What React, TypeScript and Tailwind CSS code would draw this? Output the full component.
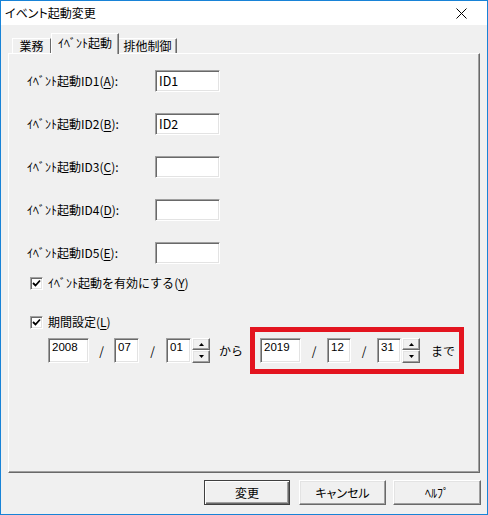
import React from "react";

const sunken =
  "bg-white border border-t-[#a0a0a0] border-l-[#a0a0a0] border-r-white border-b-white shadow-[inset_1px_1px_0_#696969,inset_-1px_-1px_0_#e3e3e3]";
const raised =
  "bg-[#f0f0f0] border border-t-white border-l-white border-r-[#696969] border-b-[#696969] shadow-[inset_-1px_-1px_0_#a0a0a0,inset_1px_1px_0_#e3e3e3]";

function U({ c }: { c: string }) {
  return <span className="underline underline-offset-2">{c}</span>;
}

function Row({ n, k, value }: { n: number; k: string; value?: string }) {
  return (
    <div className="flex items-center h-[22px]">
      <div className="w-[128px] whitespace-nowrap text-[12px] leading-none">
        ｲﾍﾞﾝﾄ起動ID{n}(<U c={k} />):
      </div>
      <div className={`${sunken} w-[65px] h-[22px] px-[3px] pt-[2px] text-[12.5px] leading-[15px]`}>
        {value}
      </div>
    </div>
  );
}

function Check({ label, k }: { label: string; k: string }) {
  return (
    <div className="flex items-center h-[14px]">
      <div className={`${sunken} w-[13px] h-[13px] flex items-center justify-center`}>
        <svg width="9" height="9" viewBox="0 0 9 9">
          <polyline points="1,4 3.5,6.5 8,1.5" fill="none" stroke="#000" strokeWidth="1.8" />
        </svg>
      </div>
      <div className="ml-[5px] text-[12px] leading-none whitespace-nowrap">
        {label}(<U c={k} />)
      </div>
    </div>
  );
}

function Num({ v, w }: { v: string; w: string }) {
  return (
    <div className={`${sunken} ${w} h-[25px] px-[3px] pt-[1px] text-[11.5px] leading-[15px] font-['Liberation_Sans_Narrow','Liberation_Sans',sans-serif]`}>
      {v}
    </div>
  );
}

function Spin() {
  return (
    <div className="flex flex-col w-[18px] h-[25px] ml-[1px]">
      <div className={`${raised} h-[12px] flex items-center justify-center`}>
        <svg width="5" height="3" viewBox="0 0 5 3">
          <polygon points="2.5,0 5,3 0,3" fill="#000" />
        </svg>
      </div>
      <div className={`${raised} h-[13px] flex items-center justify-center`}>
        <svg width="5" height="3" viewBox="0 0 5 3">
          <polygon points="0,0 5,0 2.5,3" fill="#000" />
        </svg>
      </div>
    </div>
  );
}

function Slash({ w }: { w: string }) {
  return <div className={`${w} text-center text-[12px] leading-none`}>/</div>;
}

export default function App() {
  return (
    <div className="w-[488px] h-[515px] border border-[#1883d7] bg-[#f0f0f0] flex flex-col text-black font-['Noto_Sans_CJK_JP','Liberation_Sans',sans-serif] overflow-hidden">
      {/* title bar */}
      <div className="h-[24px] bg-white flex items-center justify-between pl-[4px] pr-[20px]">
        <div className="text-[12px] leading-none [font-feature-settings:'palt']">イベント起動変更</div>
        <svg width="11" height="11" viewBox="0 0 11 11">
          <line x1="0.5" y1="0.5" x2="10.5" y2="10.5" stroke="#000" strokeWidth="1" />
          <line x1="10.5" y1="0.5" x2="0.5" y2="10.5" stroke="#000" strokeWidth="1" />
        </svg>
      </div>

      {/* tabs */}
      <div className="mt-[8px] h-[20px] flex items-end pl-[11px] relative z-10">
        <div className="w-[39px] h-[15px] border-t border-l border-r border-t-white border-l-white border-r-[#696969] flex items-center justify-center text-[12px] leading-none whitespace-nowrap">
          業務
        </div>
        <div className="w-[68px] h-[21px] -mb-px bg-[#f0f0f0] border-t border-l border-r border-t-white border-l-white border-r-[#696969] shadow-[inset_-1px_0_0_#a0a0a0] flex justify-center pt-[3px] text-[12px] leading-none whitespace-nowrap">
          ｲﾍﾞﾝﾄ起動
        </div>
        <div className="w-[58px] h-[15px] border-t border-r border-t-white border-r-[#696969] shadow-[inset_-1px_0_0_#a0a0a0] flex items-center justify-center text-[12px] leading-none whitespace-nowrap">
          排他制御
        </div>
      </div>

      {/* panel */}
      <div className="ml-[7px] w-[472px] h-[420px] border border-t-white border-l-white border-r-[#696969] border-b-[#696969] shadow-[inset_-1px_-1px_0_#a0a0a0] flex flex-col pt-[16px]">
        <div className="flex flex-col gap-[21px] pl-[18px]">
          <Row n={1} k="A" value="ID1" />
          <Row n={2} k="B" value="ID2" />
          <Row n={3} k="C" />
          <Row n={4} k="D" />
          <Row n={5} k="E" />
        </div>
        <div className="pl-[21px] mt-[12px]">
          <Check label="ｲﾍﾞﾝﾄ起動を有効にする" k="Y" />
        </div>
        <div className="pl-[21px] mt-[25px]">
          <Check label="期間設定" k="L" />
        </div>
        <div className="mt-[9px] pl-[39px] flex items-center h-[25px]">
          <Num v="2008" w="w-[41px]" />
          <Slash w="w-[25px]" />
          <Num v="07" w="w-[25px]" />
          <Slash w="w-[27px]" />
          <Num v="01" w="w-[25px]" />
          <Spin />
          <div className="ml-[9px] text-[12px] leading-none">から</div>
          <div className="ml-[7px] -my-[11px] border-[5px] border-[#e3141f] py-[6px] pl-[5px] pr-[4px] flex items-center">
            <Num v="2019" w="w-[41px]" />
            <Slash w="w-[26px]" />
            <Num v="12" w="w-[24px]" />
            <Slash w="w-[26px]" />
            <Num v="31" w="w-[24px]" />
            <Spin />
            <div className="ml-[11px] text-[12px] leading-none">まで</div>
          </div>
        </div>
      </div>

      {/* buttons */}
      <div className="mt-[7px] h-[25px] flex pl-[203px]">
        <div className="w-[86px] h-[25px] bg-[#f0f0f0] border border-[#404040] shadow-[inset_1px_1px_0_#fff,inset_-1px_-1px_0_#696969,inset_-2px_-2px_0_#a0a0a0] flex items-center justify-center text-[12px] leading-none">
          変更
        </div>
        <div className={`${raised} ml-[9px] w-[87px] h-[25px] flex items-center justify-center text-[12px] leading-none [font-feature-settings:'palt']`}>
          キャンセル
        </div>
        <div className={`${raised} ml-[7px] w-[88px] h-[25px] flex items-center justify-center text-[12px] leading-none`}>
          ﾍﾙﾌﾟ
        </div>
      </div>
    </div>
  );
}
